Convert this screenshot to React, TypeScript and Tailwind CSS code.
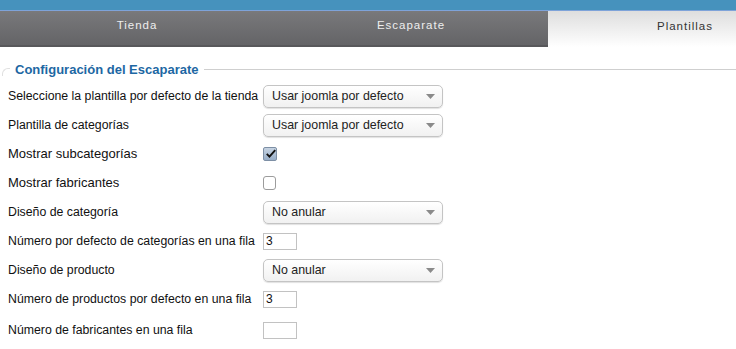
import React from 'react'

const font = { fontFamily: '"Liberation Sans", Arial, sans-serif' }

const Select = ({ value }: { value: string }) => (
  <div className="flex h-[23px] w-[180px] items-center justify-between rounded-[5px] border border-[#c4c4c4] bg-gradient-to-b from-white to-[#f1f1f1] pl-[8px] pr-[7px] text-[12.4px] text-[#222] shadow-[0_1px_1px_rgba(0,0,0,0.12)]">
    <span>{value}</span>
    <svg width="9" height="5" viewBox="0 0 9 5">
      <path d="M0 0h9L4.5 5z" fill="#8a8a8a" />
    </svg>
  </div>
)

const TextInput = ({ value }: { value: string }) => (
  <div className="flex h-[17px] w-[34px] items-center border border-[#c2c2c2] bg-white pl-[2px] text-[12px] text-[#111]">
    {value}
  </div>
)

const Checkbox = ({ checked }: { checked?: boolean }) =>
  checked ? (
    <div className="flex h-[14px] w-[14px] items-center justify-center rounded-[2px] border border-[#7d8fa5] bg-gradient-to-b from-[#c6d3e2] to-[#98aec8]">
      <svg width="13" height="11" viewBox="0 0 13 11" className="-mt-[2px] ml-[2px]">
        <path d="M1 6l3.5 3.5L12 1" stroke="#111" strokeWidth="2.4" fill="none" />
      </svg>
    </div>
  ) : (
    <div className="h-[14px] w-[13px] rounded-[3px] border border-[#9c9c9c] bg-white" />
  )

const Row = ({ label, big, h, children }: { label: string; big?: boolean; h: string; children: React.ReactNode }) => (
  <div className={`flex items-center ${h}`}>
    <div className={`w-[255px] shrink-0 text-[#111] ${big ? 'text-[13px]' : 'text-[12.3px]'}`}>{label}</div>
    {children}
  </div>
)

const App = () => {
  return (
    <div className="h-[349px] w-[736px] overflow-hidden bg-white" style={font}>
      <div className="h-[10px] bg-[#4692bd]" />
      <div className="h-px bg-[#7ea3d9]" />
      <div className="flex h-[36px]">
        <div className="flex w-[274px] shrink-0 items-center justify-center border-b-2 border-[#58585b] bg-gradient-to-b from-[#79797b] to-[#646467] pb-[4px] text-[11.5px] tracking-[1px] text-[#eee]">
          Tienda
        </div>
        <div className="flex w-[274px] shrink-0 items-center justify-center border-b-2 border-[#58585b] bg-gradient-to-b from-[#79797b] to-[#646467] pb-[4px] text-[11.5px] tracking-[1px] text-[#eee]">
          Escaparate
        </div>
        <div className="flex w-[274px] shrink-0 items-center justify-center bg-gradient-to-b from-[#dedede] to-white pb-[4px] text-[11.5px] tracking-[1px] text-[#333]">
          Plantillas
        </div>
      </div>
      <div className="mt-[13px] pl-[8px]">
        <div className="-ml-[6px] flex items-center">
          <div className="mt-[8px] h-[8px] w-[8px] self-start rounded-tl-[6px] border-t border-l border-[#e0e0e0]" />
          <span className="px-[5px] text-[13px] font-bold text-[#1d67a3]">Configuración del Escaparate</span>
          <div className="h-px flex-1 bg-[#cfcfcf]" />
        </div>
        <div className="mt-[2px] flex flex-col">
          <Row label="Seleccione la plantilla por defecto de la tienda" h="h-[29px]">
            <Select value="Usar joomla por defecto" />
          </Row>
          <Row label="Plantilla de categorías" h="h-[29px]">
            <Select value="Usar joomla por defecto" />
          </Row>
          <Row label="Mostrar subcategorías" big h="h-[29px]">
            <Checkbox checked />
          </Row>
          <Row label="Mostrar fabricantes" big h="h-[29px]">
            <Checkbox />
          </Row>
          <Row label="Diseño de categoría" h="h-[29px]">
            <Select value="No anular" />
          </Row>
          <Row label="Número por defecto de categorías en una fila" h="h-[29px]">
            <TextInput value="3" />
          </Row>
          <Row label="Diseño de producto" h="h-[29px]">
            <Select value="No anular" />
          </Row>
          <Row label="Número de productos por defecto en una fila" h="h-[29px]">
            <TextInput value="3" />
          </Row>
          <Row label="Número de fabricantes en una fila" h="h-[33px]">
            <TextInput value="" />
          </Row>
        </div>
      </div>
    </div>
  )
}

export default App
